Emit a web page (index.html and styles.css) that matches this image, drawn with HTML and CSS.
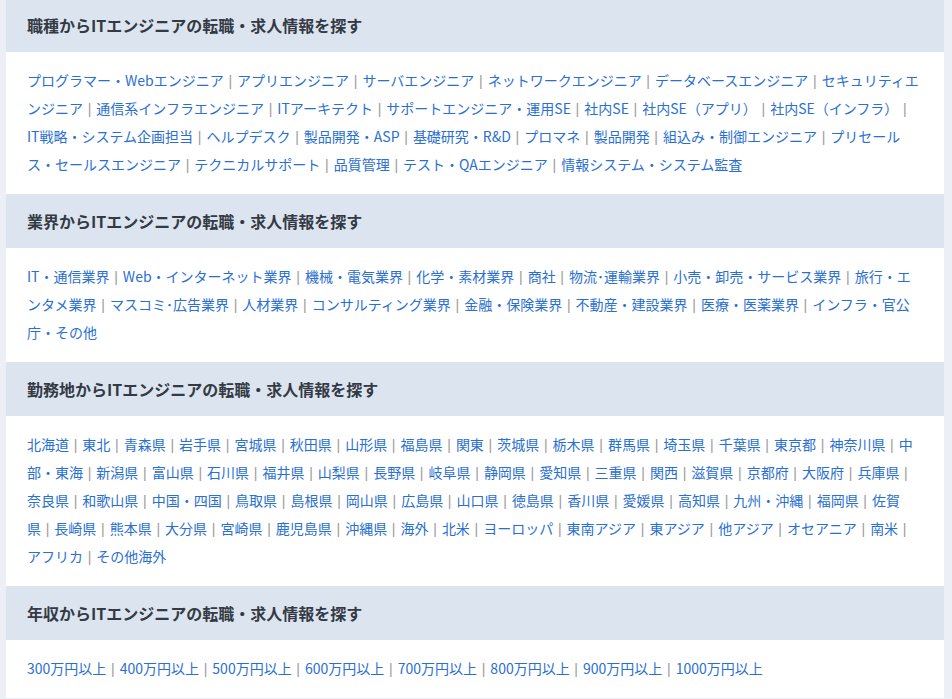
FILE: index.html
```html
<!DOCTYPE html>
<html lang="ja">
<head>
  <meta charset="UTF-8" />
  <meta name="viewport" content="width=device-width, initial-scale=1.0"/>
  <title>ITエンジニアの転職・求人情報を探す</title>
  <link rel="stylesheet" href="styles.css">
</head>
<body>

  <div class="search-area">

    <section class="search-block">
      <h2 class="search-head">職種からITエンジニアの転職・求人情報を探す</h2>
      <ul class="search-links">
        <li><a href="#">プログラマー・Webエンジニア</a></li>
        <li><a href="#">アプリエンジニア</a></li>
        <li><a href="#">サーバエンジニア</a></li>
        <li><a href="#">ネットワークエンジニア</a></li>
        <li><a href="#">データベースエンジニア</a></li>
        <li><a href="#">セキュリティエンジニア</a></li>
        <li><a href="#">通信系インフラエンジニア</a></li>
        <li><a href="#">ITアーキテクト</a></li>
        <li><a href="#">サポートエンジニア・運用SE</a></li>
        <li><a href="#">社内SE</a></li>
        <li><a href="#">社内SE（アプリ）</a></li>
        <li><a href="#">社内SE（インフラ）</a></li>
        <li><a href="#">IT戦略・システム企画担当</a></li>
        <li><a href="#">ヘルプデスク</a></li>
        <li><a href="#">製品開発・ASP</a></li>
        <li><a href="#">基礎研究・R&amp;D</a></li>
        <li><a href="#">プロマネ</a></li>
        <li><a href="#">製品開発</a></li>
        <li><a href="#">組込み・制御エンジニア</a></li>
        <li><a href="#">プリセールス・セールスエンジニア</a></li>
        <li><a href="#">テクニカルサポート</a></li>
        <li><a href="#">品質管理</a></li>
        <li><a href="#">テスト・QAエンジニア</a></li>
        <li><a href="#">情報システム・システム監査</a></li>
      </ul>
    </section>

    <section class="search-block">
      <h2 class="search-head">業界からITエンジニアの転職・求人情報を探す</h2>
      <ul class="search-links">
        <li><a href="#">IT・通信業界</a></li>
        <li><a href="#">Web・インターネット業界</a></li>
        <li><a href="#">機械・電気業界</a></li>
        <li><a href="#">化学・素材業界</a></li>
        <li><a href="#">商社</a></li>
        <li><a href="#">物流･運輸業界</a></li>
        <li><a href="#">小売・卸売・サービス業界</a></li>
        <li><a href="#">旅行・エンタメ業界</a></li>
        <li><a href="#">マスコミ･広告業界</a></li>
        <li><a href="#">人材業界</a></li>
        <li><a href="#">コンサルティング業界</a></li>
        <li><a href="#">金融・保険業界</a></li>
        <li><a href="#">不動産・建設業界</a></li>
        <li><a href="#">医療・医薬業界</a></li>
        <li><a href="#">インフラ・官公庁・その他</a></li>
      </ul>
    </section>

    <section class="search-block">
      <h2 class="search-head">勤務地からITエンジニアの転職・求人情報を探す</h2>
      <ul class="search-links">
        <li><a href="#">北海道</a></li>
        <li><a href="#">東北</a></li>
        <li><a href="#">青森県</a></li>
        <li><a href="#">岩手県</a></li>
        <li><a href="#">宮城県</a></li>
        <li><a href="#">秋田県</a></li>
        <li><a href="#">山形県</a></li>
        <li><a href="#">福島県</a></li>
        <li><a href="#">関東</a></li>
        <li><a href="#">茨城県</a></li>
        <li><a href="#">栃木県</a></li>
        <li><a href="#">群馬県</a></li>
        <li><a href="#">埼玉県</a></li>
        <li><a href="#">千葉県</a></li>
        <li><a href="#">東京都</a></li>
        <li><a href="#">神奈川県</a></li>
        <li><a href="#">中部・東海</a></li>
        <li><a href="#">新潟県</a></li>
        <li><a href="#">富山県</a></li>
        <li><a href="#">石川県</a></li>
        <li><a href="#">福井県</a></li>
        <li><a href="#">山梨県</a></li>
        <li><a href="#">長野県</a></li>
        <li><a href="#">岐阜県</a></li>
        <li><a href="#">静岡県</a></li>
        <li><a href="#">愛知県</a></li>
        <li><a href="#">三重県</a></li>
        <li><a href="#">関西</a></li>
        <li><a href="#">滋賀県</a></li>
        <li><a href="#">京都府</a></li>
        <li><a href="#">大阪府</a></li>
        <li><a href="#">兵庫県</a></li>
        <li><a href="#">奈良県</a></li>
        <li><a href="#">和歌山県</a></li>
        <li><a href="#">中国・四国</a></li>
        <li><a href="#">鳥取県</a></li>
        <li><a href="#">島根県</a></li>
        <li><a href="#">岡山県</a></li>
        <li><a href="#">広島県</a></li>
        <li><a href="#">山口県</a></li>
        <li><a href="#">徳島県</a></li>
        <li><a href="#">香川県</a></li>
        <li><a href="#">愛媛県</a></li>
        <li><a href="#">高知県</a></li>
        <li><a href="#">九州・沖縄</a></li>
        <li><a href="#">福岡県</a></li>
        <li><a href="#">佐賀県</a></li>
        <li><a href="#">長崎県</a></li>
        <li><a href="#">熊本県</a></li>
        <li><a href="#">大分県</a></li>
        <li><a href="#">宮崎県</a></li>
        <li><a href="#">鹿児島県</a></li>
        <li><a href="#">沖縄県</a></li>
        <li><a href="#">海外</a></li>
        <li><a href="#">北米</a></li>
        <li><a href="#">ヨーロッパ</a></li>
        <li><a href="#">東南アジア</a></li>
        <li><a href="#">東アジア</a></li>
        <li><a href="#">他アジア</a></li>
        <li><a href="#">オセアニア</a></li>
        <li><a href="#">南米</a></li>
        <li><a href="#">アフリカ</a></li>
        <li><a href="#">その他海外</a></li>
      </ul>
    </section>

    <section class="search-block">
      <h2 class="search-head">年収からITエンジニアの転職・求人情報を探す</h2>
      <ul class="search-links">
        <li><a href="#">300万円以上</a></li>
        <li><a href="#">400万円以上</a></li>
        <li><a href="#">500万円以上</a></li>
        <li><a href="#">600万円以上</a></li>
        <li><a href="#">700万円以上</a></li>
        <li><a href="#">800万円以上</a></li>
        <li><a href="#">900万円以上</a></li>
        <li><a href="#">1000万円以上</a></li>
      </ul>
    </section>

  </div>

</body>
</html>
```

FILE: styles.css
```css
* {
  margin: 0;
  padding: 0;
  box-sizing: border-box;
  font-family: "Noto Sans CJK JP", "Noto Sans", sans-serif;
}

body {
  background: #eceff5;
  color: #333;
  padding: 0 8px 0 6px;
}

/* page is scrolled a little past the first heading's top edge */
.search-area {
  margin-top: -2px;
}

.search-head {
  background-color: #dce4f0;
  color: #333a44;
  font-size: 16px;
  font-weight: 700;
  line-height: 54px;
  padding: 0 21px;
}

.search-links {
  list-style: none;
  background: white;
  padding: 14px 20px 16px 21px;
  font-size: 14px;
  line-height: 28px;
}

.search-links li {
  display: inline;
}

/* thin divider after each link; the source space follows it,
   so a wrapped line keeps the bar at its end */
.search-links li:not(:last-child)::after {
  content: "|";
  font-family: "Liberation Sans", sans-serif;
  line-height: 1;
  color: #9a9a9a;
  margin: 0 1.9px 0 4.7px;
}

.search-links a {
  color: #2a6fd3;
  text-decoration: none;
}

.search-links a:hover {
  text-decoration: underline;
}
```
